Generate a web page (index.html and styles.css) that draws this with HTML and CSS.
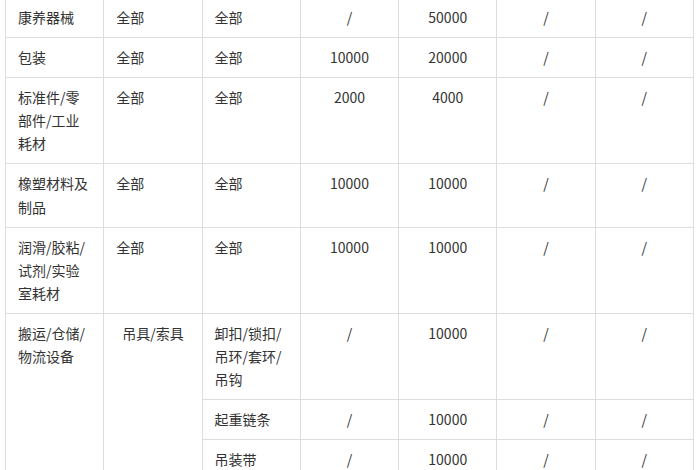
FILE: index.html
```html
<!DOCTYPE html>
<html lang="zh-CN">
<head>
<meta charset="utf-8">
<title>表格</title>
<link rel="stylesheet" href="styles.css">
</head>
<body>
<div class="page">
  <table class="spec">
    <tbody>
      <tr>
        <td>康养器械</td>
        <td>全部</td>
        <td>全部</td>
        <td class="c">/</td>
        <td class="c">50000</td>
        <td class="c">/</td>
        <td class="c">/</td>
      </tr>
      <tr>
        <td>包装</td>
        <td>全部</td>
        <td>全部</td>
        <td class="c">10000</td>
        <td class="c">20000</td>
        <td class="c">/</td>
        <td class="c">/</td>
      </tr>
      <tr>
        <td>标准件/零部件/工业耗材</td>
        <td>全部</td>
        <td>全部</td>
        <td class="c">2000</td>
        <td class="c">4000</td>
        <td class="c">/</td>
        <td class="c">/</td>
      </tr>
      <tr>
        <td>橡塑材料及制品</td>
        <td>全部</td>
        <td>全部</td>
        <td class="c">10000</td>
        <td class="c">10000</td>
        <td class="c">/</td>
        <td class="c">/</td>
      </tr>
      <tr>
        <td>润滑/胶粘/试剂/实验室耗材</td>
        <td>全部</td>
        <td>全部</td>
        <td class="c">10000</td>
        <td class="c">10000</td>
        <td class="c">/</td>
        <td class="c">/</td>
      </tr>
      <tr>
        <td rowspan="3">搬运/仓储/物流设备</td>
        <td rowspan="3" class="c">吊具/索具</td>
        <td>卸扣/锁扣/吊环/套环/吊钩</td>
        <td class="c">/</td>
        <td class="c">10000</td>
        <td class="c">/</td>
        <td class="c">/</td>
      </tr>
      <tr>
        <td>起重链条</td>
        <td class="c">/</td>
        <td class="c">10000</td>
        <td class="c">/</td>
        <td class="c">/</td>
      </tr>
      <tr>
        <td>吊装带</td>
        <td class="c">/</td>
        <td class="c">10000</td>
        <td class="c">/</td>
        <td class="c">/</td>
      </tr>
    </tbody>
  </table>
</div>
</body>
</html>
```

FILE: styles.css
```css
html, body {
  margin: 0;
  padding: 0;
  background: #ffffff;
}

.page {
  padding-left: 5px;
  overflow: hidden;
  height: 470px;
}

.spec {
  margin-top: -3px;
  width: 689px;
  border-collapse: collapse;
  table-layout: fixed;
  font-family: "Noto Sans CJK SC", "Noto Sans", sans-serif;
  font-size: 14px;
  line-height: 23.1px;
  color: #333333;
}

.spec td {
  border: 1px solid #dedede;
  padding: 8px 12px;
  vertical-align: top;
  text-align: left;
  word-break: normal;
}

.spec td.c {
  text-align: center;
}
```
